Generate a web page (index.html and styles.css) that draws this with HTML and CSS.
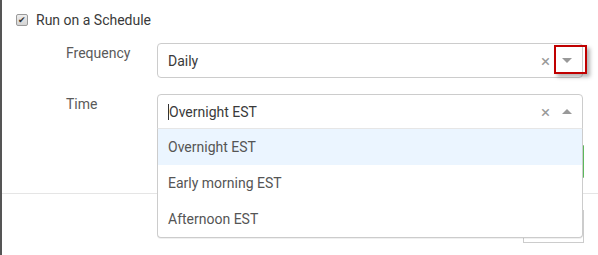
FILE: index.html
```html
<!DOCTYPE html>
<html lang="en">
<head>
    <meta charset="UTF-8">
    <title>Schedule</title>
    <link rel="stylesheet" href="styles.css">
</head>
<body>
    <div class="modal">
        <div class="modal-body">
            <label class="check">
                <span class="check-box">&#10004;</span>
                Run on a Schedule
            </label>
            <div class="form-row">
                <div class="form-label">Frequency</div>
                <div class="select">
                    <span class="select-value">Daily</span>
                    <span class="select-clear">&times;</span>
                    <span class="select-arrow down"></span>
                    <div class="callout"></div>
                </div>
            </div>
            <div class="form-row">
                <div class="form-label">Time</div>
                <div class="select open">
                    <span class="caret"></span>
                    <span class="select-value">Overnight EST</span>
                    <span class="select-clear">&times;</span>
                    <span class="select-arrow up"></span>
                    <div class="menu">
                        <div class="option active">Overnight EST</div>
                        <div class="option">Early morning EST</div>
                        <div class="option">Afternoon EST</div>
                    </div>
                </div>
            </div>
            <div class="form-row">
                <div class="form-label"></div>
                <div class="field"></div>
            </div>
        </div>
        <div class="modal-footer">
            <button class="btn">Save</button>
        </div>
    </div>
</body>
</html>
```

FILE: styles.css
```css
body {
    margin: 0;
    font-family: Roboto, "Liberation Sans", sans-serif;
    font-size: 14px;
    color: #3a3a3a;
    background: #fff;
    width: 598px;
    height: 255px;
    overflow: hidden;
}
.modal {
    border-left: 2px solid #555;
    height: 255px;
}
.modal-body {
    padding: 10px 0 15px 14px;
    border-bottom: 1px solid #e5e5e5;
}
.check {
    display: flex;
    align-items: center;
    height: 20px;
    gap: 8px;
}
.check-box {
    width: 10px;
    height: 10px;
    border: 1px solid #9a9a9a;
    border-radius: 2px;
    background: linear-gradient(#eee, #d4d4d4);
    color: #333;
    font-size: 9px;
    line-height: 10px;
    text-align: center;
}
.form-row {
    display: flex;
    margin-top: 13px;
    padding-left: 50px;
}
.form-row + .form-row {
    margin-top: 16px;
}
.form-label {
    width: 91px;
    color: #5a5a5a;
    padding-top: 2px;
}
.select {
    position: relative;
    width: 426px;
    height: 35px;
    box-sizing: border-box;
    border: 1px solid #ccc;
    border-radius: 4px;
    display: flex;
    align-items: center;
    padding-left: 10px;
    background: #fff;
}
.select.open {
    border-bottom-left-radius: 0;
    border-bottom-right-radius: 0;
}
.caret {
    width: 1px;
    height: 16px;
    background: #333;
}
.select-value {
    flex: 1;
}
.select-clear {
    color: #999;
    font-size: 17px;
    width: 13px;
    margin-right: 8px;
}
.select-arrow {
    width: 0;
    height: 0;
    border-left: 5px solid transparent;
    border-right: 5px solid transparent;
    margin-right: 10px;
}
.select-arrow.down {
    border-top: 5px solid #999;
}
.select-arrow.up {
    border-bottom: 5px solid #999;
}
.callout {
    position: absolute;
    left: 396px;
    top: 1px;
    width: 29px;
    height: 25px;
    border: 2px solid #c00000;
    box-shadow: 3px 3px 4px rgba(0, 0, 0, 0.3);
}
.menu {
    position: absolute;
    top: 33px;
    left: -1px;
    right: -1px;
    border: 1px solid #ccc;
    border-top-color: #e6e6e6;
    border-radius: 0 0 4px 4px;
    background: #fff;
    box-shadow: 0 1px 0 rgba(0, 0, 0, 0.06);
    z-index: 2;
}
.option {
    height: 36px;
    line-height: 36px;
    padding-left: 10px;
    color: #555;
}
.option.active {
    background: #ebf5ff;
}
.field {
    width: 427px;
    height: 33px;
    box-sizing: border-box;
    border: 1px solid #ccc;
    border-right-color: #5cb85c;
}
.modal-footer {
    display: flex;
    justify-content: flex-end;
    padding: 16px 14px;
}
.btn {
    width: 61px;
    height: 33px;
    border: 1px solid #ccc;
    background: #fff;
    font-family: inherit;
    font-size: 13px;
    color: #333;
}
```
